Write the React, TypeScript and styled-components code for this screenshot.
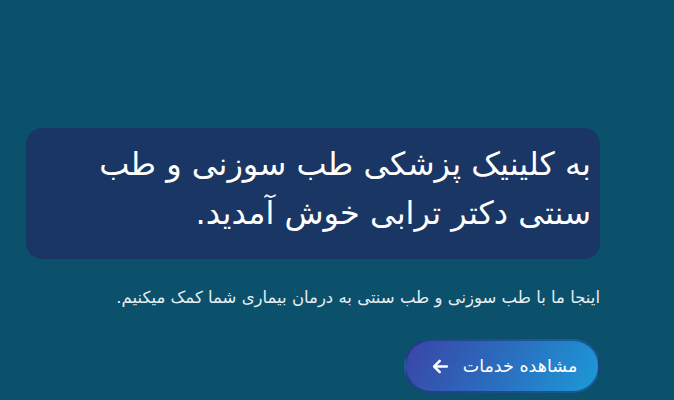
import React from "react";
import styled, { createGlobalStyle } from "styled-components";

const Global = createGlobalStyle`
  html, body {
    margin: 0;
    padding: 0;
    background: #0b516b;
    width: 674px;
    height: 400px;
    overflow: hidden;
  }
  body {
    font-family: "DejaVu Sans", "Noto Sans", sans-serif;
  }
`;

const Hero = styled.section`
  direction: rtl;
  box-sizing: border-box;
  width: 674px;
  height: 400px;
  padding: 128px 74px 0 26px;
  display: flex;
  flex-direction: column;
  align-items: flex-start;
`;

const TitleCard = styled.div`
  box-sizing: border-box;
  width: 574px;
  height: 131px;
  background: #1a3664;
  border-radius: 16px;
  padding: 12px 9px 0 12px;
`;

const Title = styled.h1`
  margin: 0;
  color: #ffffff;
  font-size: 32px;
  font-weight: 400;
  line-height: 49px;
  text-align: right;
`;

const Lead = styled.p`
  margin: 26px 0 0;
  color: #e6eef3;
  font-size: 16.5px;
  line-height: 26px;
`;

const CtaButton = styled.button`
  margin-top: 28px;
  box-sizing: border-box;
  width: 196px;
  height: 54px;
  border: 2px solid rgba(20, 50, 110, 0.55);
  border-radius: 27px;
  background: linear-gradient(120deg, #3a45a6 0%, #2c69bc 45%, #1c9ad8 100%);
  color: #ffffff;
  font-family: inherit;
  font-size: 17.5px;
  display: flex;
  align-items: center;
  justify-content: center;
  gap: 13px;
  direction: rtl;
  cursor: pointer;
  padding: 0 0 0 4px;
`;

const Arrow = () => (
  <svg width="19" height="19" viewBox="0 0 24 24" fill="none" stroke="#ffffff" strokeWidth="3.2" strokeLinecap="round" strokeLinejoin="round">
    <path d="M20 12H5" />
    <path d="M11 5l-7 7 7 7" />
  </svg>
);

export default function App() {
  return (
    <>
      <Global />
      <Hero>
        <TitleCard>
          <Title>
            به کلینیک پزشکی طب سوزنی و طب
            <br />
            سنتی دکتر ترابی خوش آمدید.
          </Title>
        </TitleCard>
        <Lead>اینجا ما با طب سوزنی و طب سنتی به درمان بیماری شما کمک میکنیم.</Lead>
        <CtaButton>
          <span>مشاهده خدمات</span>
          <Arrow />
        </CtaButton>
      </Hero>
    </>
  );
}
